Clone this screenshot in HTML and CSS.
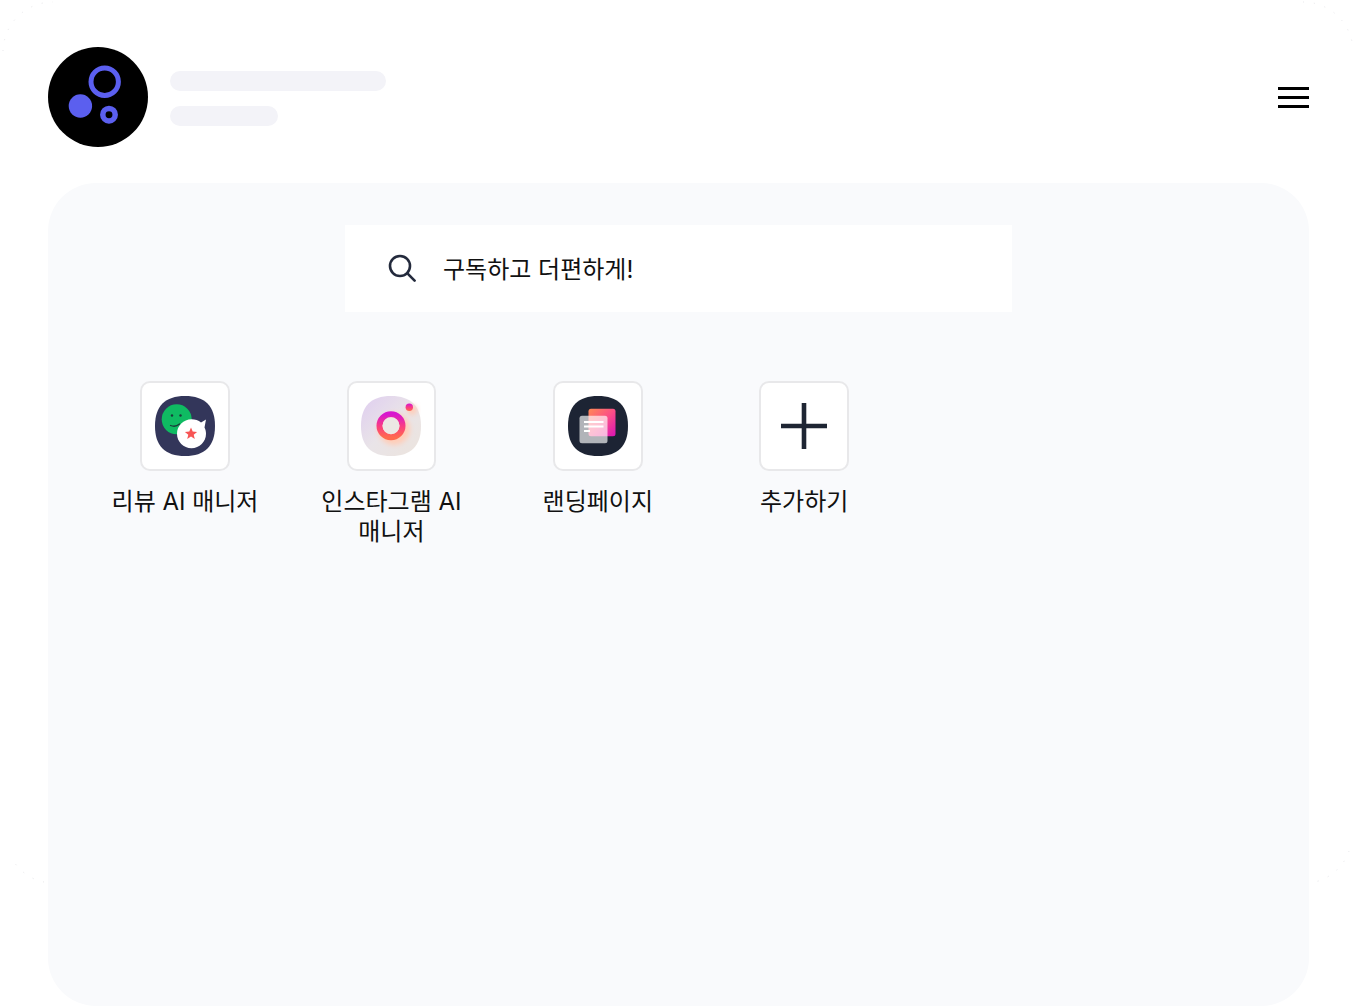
FILE: index.html
```html
<!DOCTYPE html>
<html lang="ko">
<head>
    <meta charset="UTF-8">
    <meta name="viewport" content="width=device-width, initial-scale=1.0">
    <title>구독하고 더편하게!</title>
    <link rel="stylesheet" href="styles.css">
</head>
<body>
    <div class="page">
        <!-- 모서리 점선 장식 -->
        <svg class="corner-dots" viewBox="0 0 1354 1006">
            <path d="M3 51A50 50 0 0 1 53 2M1303 2A50 50 0 0 1 1353 50M1349 851A48 48 0 0 1 1309 883M44 882A48 48 0 0 1 11 857" fill="none" stroke="#e6e6ea" stroke-width="1" stroke-dasharray="1 10"/>
        </svg>

        <!-- 상단 헤더 -->
        <header class="top-bar">
            <svg class="logo" viewBox="0 0 100 100">
                <circle cx="50" cy="50" r="50" fill="#000"/>
                <circle cx="56.7" cy="34.7" r="13.7" fill="none" stroke="#5b5fef" stroke-width="5"/>
                <circle cx="32.400" cy="59" r="11.7" fill="#5b5fef"/>
                <circle cx="61" cy="67.7" r="6.2" fill="none" stroke="#5b5fef" stroke-width="5.5"/>
            </svg>
            <div class="skeleton">
                <div class="skeleton-line long"></div>
                <div class="skeleton-line short"></div>
            </div>
            <button class="menu-btn" aria-label="메뉴">
                <span></span><span></span><span></span>
            </button>
        </header>

        <main class="panel">
            <div class="search-box">
                <svg class="search-icon" viewBox="0 0 28 28">
                    <circle cx="12" cy="12" r="10" fill="none" stroke="#232a3c" stroke-width="2.6"/>
                    <path d="M19.4 19.4L26.6 26.6" stroke="#232a3c" stroke-width="2.6" stroke-linecap="round"/>
                </svg>
                <span class="search-text">구독하고 더편하게!</span>
            </div>

            <div class="app-grid">
                <div class="app-item">
                    <div class="app-tile">
                        <svg class="app-icon" viewBox="0 0 60 60">
                            <path d="M30 0C50 0 60 10 60 30S50 60 30 60 0 50 0 30 10 0 30 0Z" fill="#33365a"/>
                            <circle cx="21.7" cy="23.3" r="15" fill="#0fbb62"/>
                            <circle cx="17" cy="19.5" r="1.2" fill="#1b3a3a"/>
                            <circle cx="25.5" cy="19.5" r="1.2" fill="#1b3a3a"/>
                            <path d="M15.5 29.5q5 2 9-1.5" fill="none" stroke="#1b3a3a" stroke-width="1.3" stroke-linecap="round"/>
                            <path d="M36.5 23.3C40 23.3 43.5 24.5 46 26.5L51 23.5 49.5 31.5C50.5 33.5 51 35.5 51 37.8 51 45.8 44.5 52.3 36.5 52.3S22 45.8 22 37.8 28.5 23.3 36.5 23.3Z" fill="#fff"/>
                            <path d="M36 31.5l1.7 4.1 4.4.3-3.4 2.8 1.1 4.3-3.8-2.4-3.8 2.4 1.1-4.3-3.4-2.8 4.4-.3Z" fill="#f75555"/>
                        </svg>
                    </div>
                    <p class="app-name">리뷰 AI 매니저</p>
                </div>
                <div class="app-item">
                    <div class="app-tile">
                        <svg class="app-icon" viewBox="0 0 60 60">
                            <defs>
                                <linearGradient id="instaBg" x1="0" y1="0" x2="1" y2="1">
                                    <stop offset="0" stop-color="#dfcdf0"/>
                                    <stop offset="0.5" stop-color="#e9e4e8"/>
                                    <stop offset="1" stop-color="#ece4dd"/>
                                </linearGradient>
                                <linearGradient id="instaRing" x1="0" y1="0" x2="0" y2="1">
                                    <stop offset="0" stop-color="#d716cf"/>
                                    <stop offset="0.55" stop-color="#fb3f7f"/>
                                    <stop offset="1" stop-color="#ff6a4d"/>
                                </linearGradient>
                                <filter id="instaGlow" x="-50%" y="-50%" width="200%" height="200%">
                                    <feGaussianBlur stdDeviation="2.5"/>
                                </filter>
                            </defs>
                            <path d="M30 0C50 0 60 10 60 30S50 60 30 60 0 50 0 30 10 0 30 0Z" fill="url(#instaBg)"/>
                            <circle cx="33" cy="33" r="16" fill="#ffcdb8" filter="url(#instaGlow)"/>
                            <circle cx="51" cy="14" r="5" fill="#ffcdb8" filter="url(#instaGlow)"/>
                            <circle cx="30" cy="29.7" r="11.5" fill="none" stroke="url(#instaRing)" stroke-width="6"/>
                            <circle cx="30" cy="29.7" r="8.5" fill="#ece8e4"/>
                            <circle cx="48.3" cy="11.3" r="3.7" fill="url(#instaRing)"/>
                        </svg>
                    </div>
                    <p class="app-name">인스타그램 AI 매니저</p>
                </div>
                <div class="app-item">
                    <div class="app-tile">
                        <svg class="app-icon" viewBox="0 0 60 60">
                            <defs>
                                <linearGradient id="pageBack" x1="0" y1="0" x2="1" y2="1">
                                    <stop offset="0" stop-color="#ff8a55"/>
                                    <stop offset="0.5" stop-color="#fb4f86"/>
                                    <stop offset="1" stop-color="#dc14b4"/>
                                </linearGradient>
                            </defs>
                            <path d="M30 0C50 0 60 10 60 30S50 60 30 60 0 50 0 30 10 0 30 0Z" fill="#1d2434"/>
                            <rect x="20.5" y="12.7" width="27" height="27.5" rx="2.5" fill="url(#pageBack)"/>
                            <rect x="11.5" y="19.7" width="28" height="27.5" rx="2.5" fill="#fff" fill-opacity="0.66"/>
                            <rect x="16" y="25" width="19.5" height="2" fill="#fff"/>
                            <rect x="16" y="29.5" width="19.5" height="2" fill="#fff"/>
                            <rect x="16" y="34" width="6" height="2" fill="#fff"/>
                        </svg>
                    </div>
                    <p class="app-name">랜딩페이지</p>
                </div>
                <div class="app-item">
                    <div class="app-tile">
                        <svg class="plus-icon" viewBox="0 0 46 46">
                            <path d="M23 0V46M0 23H46" stroke="#1e2533" stroke-width="4.6"/>
                        </svg>
                    </div>
                    <p class="app-name">추가하기</p>
                </div>
            </div>
        </main>
    </div>
</body>
</html>
```

FILE: styles.css
```css
/* 기본 스타일 */
body {
    margin: 0;
    padding: 0;
    background-color: #fff;
    font-family: Inter, "Noto Sans CJK KR", sans-serif;
    color: #111;
}

.page {
    position: relative;
    height: 1006px;
    box-sizing: border-box;
    padding: 47px 45px 0 48px;
    display: flex;
    flex-direction: column;
    overflow: hidden;
}

.corner-dots {
    position: absolute;
    left: 0;
    top: 0;
    width: 1354px;
    height: 1006px;
}

/* 헤더 */
.top-bar {
    position: relative;
    display: flex;
    align-items: center;
    height: 100px;
    flex-shrink: 0;
}

.logo {
    width: 100px;
    height: 100px;
    flex-shrink: 0;
}

.skeleton {
    margin: 3px 0 0 22px;
    display: flex;
    flex-direction: column;
    gap: 15px;
}

.skeleton-line {
    height: 20px;
    border-radius: 10px;
    background-color: #f3f3f8;
}

.skeleton-line.long {
    width: 216px;
}

.skeleton-line.short {
    width: 108px;
}

.menu-btn {
    margin-left: auto;
    width: 31px;
    padding: 0;
    border: none;
    background: none;
    display: flex;
    flex-direction: column;
    gap: 6px;
}

.menu-btn span {
    display: block;
    height: 3px;
    background-color: #000;
}

/* 메인 패널 */
.panel {
    position: relative;
    flex: 1;
    margin-top: 36px;
    padding: 42px 52px 0;
    background-color: #f9fafc;
    border-radius: 48px;
}

.search-box {
    width: 667px;
    height: 87px;
    margin-left: 245px;
    padding: 0 0 2px 43px;
    box-sizing: border-box;
    display: flex;
    align-items: center;
    gap: 27px;
    background-color: #fff;
}

.search-icon {
    width: 28px;
    height: 28px;
    flex-shrink: 0;
}

.search-text {
    font-size: 24px;
    color: #111;
}

/* 앱 목록 */
.app-grid {
    margin-top: 69px;
    display: grid;
    grid-template-columns: repeat(6, 170px);
    column-gap: 36.4px;
}

.app-item {
    display: flex;
    flex-direction: column;
    align-items: center;
}

.app-tile {
    width: 89.6px;
    height: 89.6px;
    box-sizing: border-box;
    border: 2px solid #e8e8ea;
    border-radius: 10px;
    background-color: #fff;
    display: flex;
    align-items: center;
    justify-content: center;
}

.app-icon {
    width: 60px;
    height: 60px;
}

.plus-icon {
    width: 46px;
    height: 46px;
}

.app-name {
    margin: 16.4px 0 0;
    font-size: 24px;
    line-height: 30px;
    text-align: center;
    word-break: keep-all;
    color: #111;
}
```
